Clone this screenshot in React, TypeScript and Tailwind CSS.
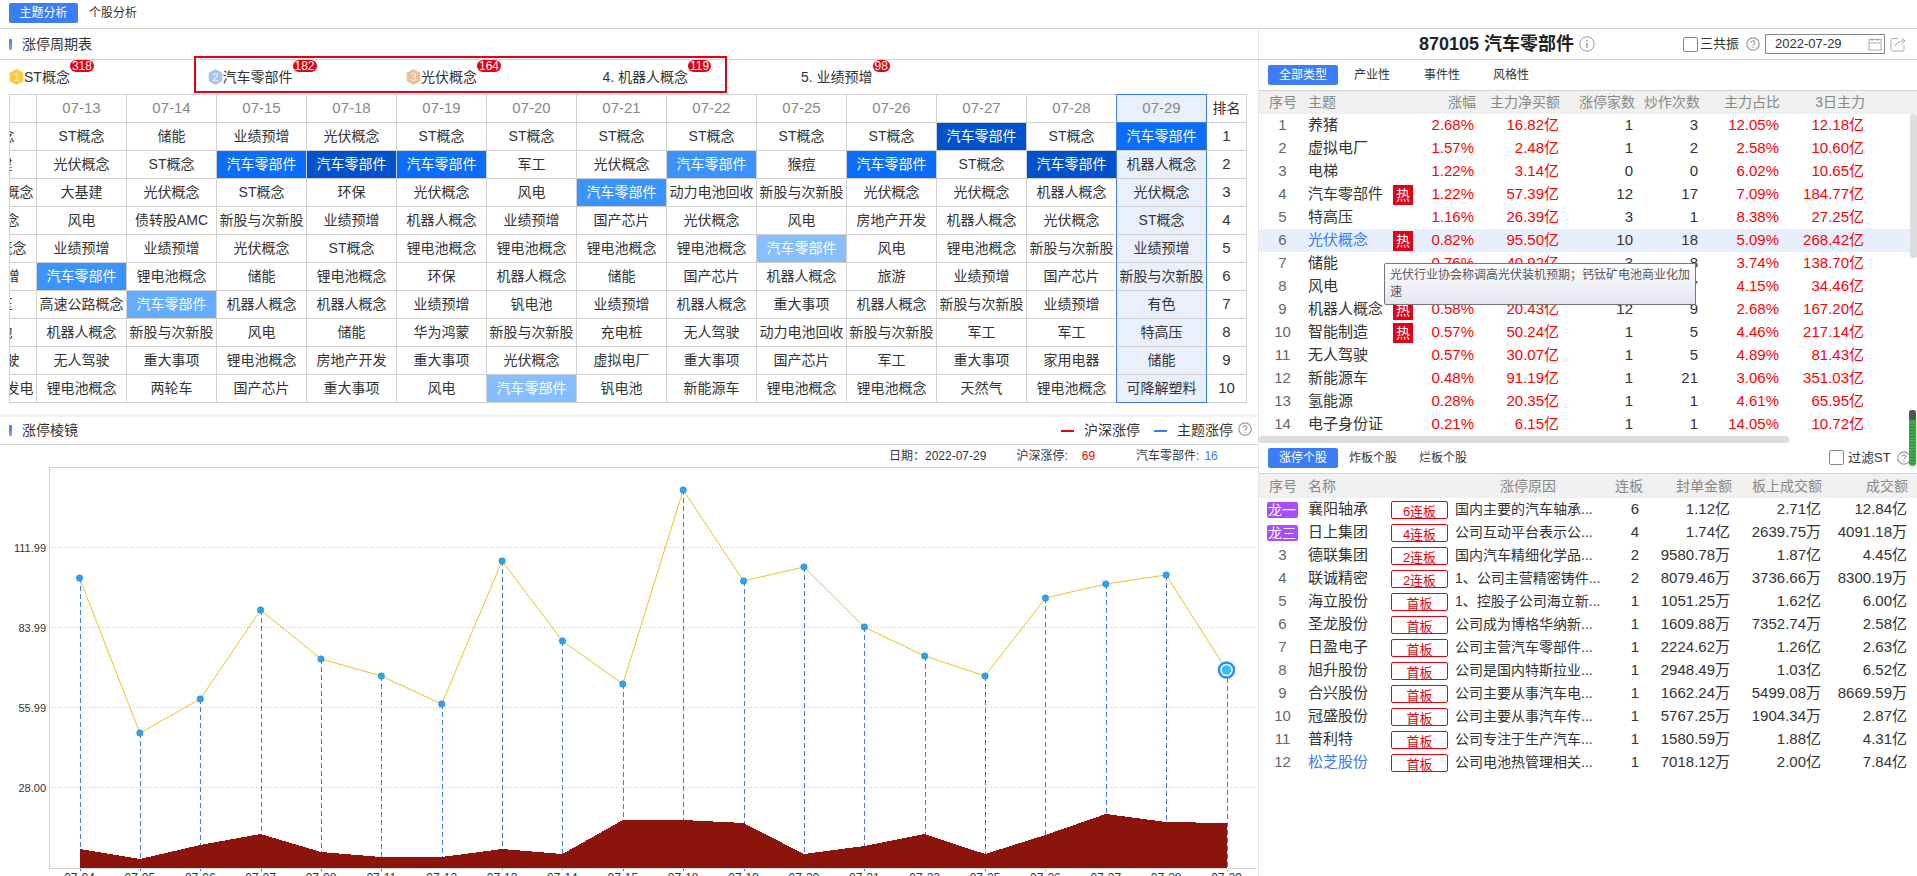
import { ReactNode } from "react";

const HOT = "汽车零部件";

const dates = ["07-12", "07-13", "07-14", "07-15", "07-18", "07-19", "07-20", "07-21", "07-22", "07-25", "07-26", "07-27", "07-28", "07-29"];

const shade: Record<string, string> = {
  d: "bg-[#0052cc]",
  n: "bg-[#0a6efa]",
  m: "bg-[#3b94fd]",
  l: "bg-[#62adff]",
  x: "bg-[#85bfff]",
};

// "汽车零部件:d" marks a coloured cell
const cycle: string[][] = [
  ["ST概念", "ST概念", "储能", "业绩预增", "光伏概念", "ST概念", "ST概念", "ST概念", "ST概念", "ST概念", "ST概念", "汽车零部件:d", "ST概念", "汽车零部件:n"],
  ["大基建", "光伏概念", "ST概念", "汽车零部件:n", "汽车零部件:d", "汽车零部件:n", "军工", "光伏概念", "汽车零部件:m", "猴痘", "汽车零部件:n", "ST概念", "汽车零部件:d", "机器人概念"],
  ["高速公路概念", "大基建", "光伏概念", "ST概念", "环保", "光伏概念", "风电", "汽车零部件:m", "动力电池回收", "新股与次新股", "光伏概念", "光伏概念", "机器人概念", "光伏概念"],
  ["光伏概念", "风电", "债转股AMC", "新股与次新股", "业绩预增", "机器人概念", "业绩预增", "国产芯片", "光伏概念", "风电", "房地产开发", "机器人概念", "光伏概念", "ST概念"],
  ["机器人概念", "业绩预增", "业绩预增", "光伏概念", "ST概念", "锂电池概念", "锂电池概念", "锂电池概念", "锂电池概念", "汽车零部件:x", "风电", "锂电池概念", "新股与次新股", "业绩预增"],
  ["业绩预增", "汽车零部件:m", "锂电池概念", "储能", "锂电池概念", "环保", "机器人概念", "储能", "国产芯片", "机器人概念", "旅游", "业绩预增", "国产芯片", "新股与次新股"],
  ["特高压", "高速公路概念", "汽车零部件:l", "机器人概念", "机器人概念", "业绩预增", "钒电池", "业绩预增", "机器人概念", "重大事项", "机器人概念", "新股与次新股", "业绩预增", "有色"],
  ["钒电池", "机器人概念", "新股与次新股", "风电", "储能", "华为鸿蒙", "新股与次新股", "充电桩", "无人驾驶", "动力电池回收", "新股与次新股", "军工", "军工", "特高压"],
  ["无人驾驶", "无人驾驶", "重大事项", "锂电池概念", "房地产开发", "重大事项", "光伏概念", "虚拟电厂", "重大事项", "国产芯片", "军工", "重大事项", "家用电器", "储能"],
  ["海上风力发电", "锂电池概念", "两轮车", "国产芯片", "重大事项", "风电", "汽车零部件:x", "钒电池", "新能源车", "锂电池概念", "锂电池概念", "天然气", "锂电池概念", "可降解塑料"],
];

const themes = [
  ["养猪", 0, "2.68%", "16.82亿", "1", "3", "12.05%", "12.18亿"],
  ["虚拟电厂", 0, "1.57%", "2.48亿", "1", "2", "2.58%", "10.60亿"],
  ["电梯", 0, "1.22%", "3.14亿", "0", "0", "6.02%", "10.65亿"],
  ["汽车零部件", 1, "1.22%", "57.39亿", "12", "17", "7.09%", "184.77亿"],
  ["特高压", 0, "1.16%", "26.39亿", "3", "1", "8.38%", "27.25亿"],
  ["光伏概念", 1, "0.82%", "95.50亿", "10", "18", "5.09%", "268.42亿"],
  ["储能", 0, "0.76%", "40.92亿", "3", "8", "3.74%", "138.70亿"],
  ["风电", 0, "0.70%", "8.95亿", "1", "7", "4.15%", "34.46亿"],
  ["机器人概念", 1, "0.58%", "20.43亿", "12", "9", "2.68%", "167.20亿"],
  ["智能制造", 1, "0.57%", "50.24亿", "1", "5", "4.46%", "217.14亿"],
  ["无人驾驶", 0, "0.57%", "30.07亿", "1", "5", "4.89%", "81.43亿"],
  ["新能源车", 0, "0.48%", "91.19亿", "1", "21", "3.06%", "351.03亿"],
  ["氢能源", 0, "0.28%", "20.35亿", "1", "1", "4.61%", "65.95亿"],
  ["电子身份证", 0, "0.21%", "6.15亿", "1", "1", "14.05%", "10.72亿"],
] as const;

const stocks = [
  ["龙一", "襄阳轴承", "6连板", "国内主要的汽车轴承...", "6", "1.12亿", "2.71亿", "12.84亿"],
  ["龙三", "日上集团", "4连板", "公司互动平台表示公...", "4", "1.74亿", "2639.75万", "4091.18万"],
  ["3", "德联集团", "2连板", "国内汽车精细化学品...", "2", "9580.78万", "1.87亿", "4.45亿"],
  ["4", "联诚精密", "2连板", "1、公司主营精密铸件...", "2", "8079.46万", "3736.66万", "8300.19万"],
  ["5", "海立股份", "首板", "1、控股子公司海立新...", "1", "1051.25万", "1.62亿", "6.00亿"],
  ["6", "圣龙股份", "首板", "公司成为博格华纳新...", "1", "1609.88万", "7352.74万", "2.58亿"],
  ["7", "日盈电子", "首板", "公司主营汽车零部件...", "1", "2224.62万", "1.26亿", "2.63亿"],
  ["8", "旭升股份", "首板", "公司是国内特斯拉业...", "1", "2948.49万", "1.03亿", "6.52亿"],
  ["9", "合兴股份", "首板", "公司主要从事汽车电...", "1", "1662.24万", "5499.08万", "8669.59万"],
  ["10", "冠盛股份", "首板", "公司主要从事汽车传...", "1", "5767.25万", "1904.34万", "2.87亿"],
  ["11", "普利特", "首板", "公司专注于生产汽车...", "1", "1580.59万", "1.88亿", "4.31亿"],
  ["12", "松芝股份", "首板", "公司电池热管理相关...", "1", "7018.12万", "2.00亿", "7.84亿"],
];

const ranks = [
  { no: 1, name: "ST概念", count: "318", fill: "#fbc93a", text: "#fff3c4" },
  { no: 2, name: HOT, count: "182", fill: "#a9c6ea", text: "#eef5fc" },
  { no: 3, name: "光伏概念", count: "164", fill: "#eac19c", text: "#fdf3e8" },
  { no: 4, name: "机器人概念", count: "119" },
  { no: 5, name: "业绩预增", count: "98" },
];

const xs = Array.from({ length: 20 }, (_, i) => 79.5 + i * 60.37);
const xLabels = ["07-04", "07-05", "07-06", "07-07", "07-08", "07-11", "07-12", "07-13", "07-14", "07-15", "07-18", "07-19", "07-20", "07-21", "07-22", "07-25", "07-26", "07-27", "07-28", "07-29"];
const lineY = [578, 733, 699, 610, 659, 676, 704, 561, 641, 684, 490, 581, 567, 627, 656, 676, 598, 584, 575, 670];
const areaY = [849, 859, 845, 834, 852, 857, 857, 849, 854, 820, 820, 823, 854, 846, 834, 854, 835, 814, 822, 823];
const yTicks = [
  { y: 547.5, label: "111.99" },
  { y: 627.5, label: "83.99" },
  { y: 707.5, label: "55.99" },
  { y: 787.5, label: "28.00" },
];

function Help({ className = "" }: { className?: string }) {
  return (
    <svg viewBox="0 0 14 14" className={`h-[14px] w-[14px] shrink-0 ${className}`}>
      <circle cx="7" cy="7" r="6.2" fill="none" stroke="#999" strokeWidth="1.2" />
      <path d="M5.2 5.6a1.8 1.8 0 1 1 2.7 1.6c-.6.35-.9.7-.9 1.3" fill="none" stroke="#999" strokeWidth="1.1" />
      <circle cx="7" cy="10.4" r=".7" fill="#999" />
    </svg>
  );
}

function SectionTitle({ children }: { children: ReactNode }) {
  return (
    <div className="flex items-center text-[14px] text-[#333]">
      <span className="ml-[9px] h-[11px] w-[3px] rounded-[1px] bg-gradient-to-b from-[#3b78f7] to-[#7fa8f9]" />
      <span className="ml-[10px]">{children}</span>
    </div>
  );
}

function Medal({ no, fill, text }: { no: number; fill: string; text: string }) {
  return (
    <svg viewBox="0 0 15 16" className="h-[16px] w-[15px] shrink-0">
      <path d="M7.5 1 13.5 4.2v7.6L7.5 15 1.5 11.8V4.2z" fill={fill} stroke={fill} strokeWidth="1.6" strokeLinejoin="round" />
      <text x="7.5" y="12" textAnchor="middle" fontSize="11" fill={text}>
        {no}
      </text>
    </svg>
  );
}

function CycleTable() {
  return (
    <div className="ml-[9px] h-[309px] w-[1239px] overflow-hidden border-l border-[#d0d0d0]">
      <table className="-ml-[63px] w-[1300px] table-fixed border-separate border-spacing-0 text-[14px] text-[#333]">
        <colgroup>
          {dates.map((d) => (
            <col key={d} className="w-[90px]" />
          ))}
          <col className="w-[40px]" />
        </colgroup>
        <thead>
          <tr>
            {dates.map((d, i) => (
              <th
                key={d}
                className={`h-[28.5px] whitespace-nowrap border-y border-r p-0 text-center text-[15px] font-normal text-[#888] ${
                  i === 13 ? "border-[#3b7de8] bg-[#e9effb]" : i === 12 ? "border-y-[#d0d0d0] border-r-[#3b7de8]" : "border-[#d0d0d0]"
                }`}
              >
                {d}
              </th>
            ))}
            <th className="border-y border-r border-[#d0d0d0] p-0 text-center font-normal">排名</th>
          </tr>
        </thead>
        <tbody>
          {cycle.map((row, r) => (
            <tr key={r}>
              {row.map((cell, c) => {
                const [name, tone] = cell.split(":");
                const last = c === 13;
                const edge = last
                  ? `border-r-[#3b7de8] ${r === 9 ? "border-b-[#3b7de8]" : "border-b-[#d0d0d0]"}`
                  : c === 12
                    ? "border-r-[#3b7de8] border-b-[#d0d0d0]"
                    : "border-[#d0d0d0]";
                return (
                  <td
                    key={c}
                    className={`h-[28px] whitespace-nowrap border-r border-b p-0 text-center ${edge} ${
                      tone ? `${shade[tone]} text-white` : last ? "bg-[#e9effb]" : ""
                    }`}
                  >
                    {name}
                  </td>
                );
              })}
              <td className="border-r border-b border-[#d0d0d0] p-0 text-center text-[15px]">{r + 1}</td>
            </tr>
          ))}
        </tbody>
      </table>
    </div>
  );
}

function Chart() {
  const area = `79.5,868 ${xs.map((x, i) => `${x},${areaY[i]}`).join(" ")} ${xs[19]},868`;
  return (
    <svg viewBox="0 468 1258 408" className="block h-[408px] w-[1258px]">
      <line x1="49.5" y1="468" x2="49.5" y2="868" stroke="#d4d4d4" />
      {yTicks.map((t) => (
        <g key={t.label}>
          <line x1="49" y1={t.y} x2="1257" y2={t.y} stroke="#c8c8c8" strokeDasharray="1 2" />
          <text x="46" y={t.y + 4} textAnchor="end" fontSize="11" fill="#333" fontFamily="Liberation Sans">
            {t.label}
          </text>
        </g>
      ))}
      {xs.map((x, i) => (
        <line key={x} x1={Math.round(x) + 0.5} y1={lineY[i]} x2={Math.round(x) + 0.5} y2="871" stroke="#3b78f7" strokeDasharray="5 3" />
      ))}
      <polygon points={area} fill="#8b150c" shapeRendering="crispEdges" />
      <line x1="49" y1="868.5" x2="1257" y2="868.5" stroke="#d4d4d4" />
      <polyline points={xs.map((x, i) => `${x},${lineY[i]}`).join(" ")} fill="none" stroke="#efc31a" strokeWidth="1" />
      {xs.slice(0, 19).map((x, i) => (
        <circle key={x} cx={x} cy={lineY[i]} r="3.2" fill="#2ba3ee" stroke="#2a86d6" strokeWidth=".6" />
      ))}
      <circle cx={xs[19]} cy={lineY[19]} r="7.5" fill="#fff" stroke="#1f8fff" strokeWidth="2.4" />
      <circle cx={xs[19]} cy={lineY[19]} r="4.8" fill="#35bdf7" />
      {xs.map((x, i) => (
        <text key={x} x={x} y="882" textAnchor="middle" fontSize="12" fill="#333" fontFamily="Liberation Sans">
          {xLabels[i]}
        </text>
      ))}
    </svg>
  );
}

function ThemeTable() {
  const cols = "grid grid-cols-[49px_85px_20px_63px_84px_75px_65px_80px_85px]";
  return (
    <div>
      <div className={`${cols} h-[23px] items-center bg-[#f0f0f0] text-[14px] text-[#888]`}>
        <span className="pl-[10px]">序号</span>
        <span>主题</span>
        <span />
        {["涨幅", "主力净买额", "涨停家数", "炒作次数", "主力占比", "3日主力"].map((h) => (
          <span key={h} className="whitespace-nowrap text-right">
            {h}
          </span>
        ))}
      </div>
      {themes.map((t, i) => (
        <div key={t[0]} className={`${cols} h-[23px] items-center text-[15px] ${i === 5 ? "bg-[#e8effc]" : ""}`}>
          <span className="pr-[2px] text-center text-[#666]">{i + 1}</span>
          <span className={`whitespace-nowrap ${i === 5 ? "text-[#3b78f7]" : "text-[#333]"}`}>{t[0]}</span>
          <span className="flex justify-center">
            {t[1] === 1 && <span className="flex h-[20px] w-[20px] items-center justify-center bg-[#e60012] text-[14px] leading-none text-white">热</span>}
          </span>
          <span className="pr-[2px] text-right text-[#f00]">{t[2]}</span>
          <span className="pr-[1px] text-right text-[#f00]">{t[3]}</span>
          <span className="pr-[2px] text-right text-[#333]">{t[4]}</span>
          <span className="pr-[2px] text-right text-[#333]">{t[5]}</span>
          <span className="pr-[1px] text-right text-[#f00]">{t[6]}</span>
          <span className="pr-[1px] text-right text-[#f00]">{t[7]}</span>
        </div>
      ))}
    </div>
  );
}

function StockTable() {
  const cols = "grid grid-cols-[49px_83px_57px_7px_160px_26px_91px_90px_86px]";
  return (
    <div>
      <div className={`${cols} h-[24px] items-center bg-[#f0f0f0] text-[14px] text-[#888]`}>
        <span className="pl-[10px]">序号</span>
        <span>名称</span>
        <span />
        <span />
        <span className="pl-[45px]">涨停原因</span>
        <span className="whitespace-nowrap text-right">连板</span>
        <span className="whitespace-nowrap text-right">封单金额</span>
        <span className="whitespace-nowrap text-right">板上成交额</span>
        <span className="whitespace-nowrap text-right">成交额</span>
      </div>
      {stocks.map((s, i) => (
        <div key={s[1]} className={`${cols} h-[23px] items-center text-[15px] text-[#333]`}>
          <span className="flex justify-center pr-[2px] text-[#666]">
            {i < 2 ? (
              <span className="ml-[-1px] flex h-[16px] w-[31px] items-center justify-center rounded-[2px] bg-[#a64dff] text-[14px] leading-none text-white">{s[0]}</span>
            ) : (
              s[0]
            )}
          </span>
          <span className={`whitespace-nowrap ${i === 11 ? "text-[#3b78f7]" : ""}`}>{s[1]}</span>
          <span className="flex h-[18px] items-center justify-center rounded-[2px] border border-[#e60012] pt-[3px] text-[13px] leading-none text-[#e60012]">{s[2]}</span>
          <span />
          <span className="whitespace-nowrap text-[14px]">{s[3]}</span>
          <span className="pr-[2px] text-right">{s[4]}</span>
          <span className="pr-[2px] text-right">{s[5]}</span>
          <span className="pr-[1px] text-right">{s[6]}</span>
          <span className="pr-[1px] text-right">{s[7]}</span>
        </div>
      ))}
    </div>
  );
}

export default function App() {
  return (
    <div className="relative h-[876px] w-full overflow-hidden bg-white font-['Liberation_Sans','Noto_Sans_CJK_SC',sans-serif] text-[#333]">
      {/* Top tabs */}
      <div className="flex h-[29px] items-start border-b border-[#d4d4d4] pl-[9px] pt-[3px] text-[12px]">
        <span className="flex h-[20px] w-[69px] items-center justify-center rounded-[2px] bg-[#3d7cf7] text-white">主题分析</span>
        <span className="ml-[11px] flex h-[20px] items-center">个股分析</span>
      </div>

      <div className="flex h-[847px]">
        {/* Left */}
        <div className="w-[1259px] shrink-0 border-r border-[#e2e2e2]">
          <div className="flex h-[31px] items-center border-b border-[#d4d4d4]">
            <SectionTitle>涨停周期表</SectionTitle>
          </div>
          <div className="relative flex h-[34px] items-center pl-[9px] text-[14px]">
            {ranks.map((r) => (
              <div key={r.no} className="flex w-[198.5px] items-center">
                {r.fill && <Medal no={r.no} fill={r.fill} text={r.text} />}
                <span className={`relative whitespace-nowrap ${r.fill ? "" : "ml-[-2px]"}`}>
                  {r.fill ? r.name : `${r.no}. ${r.name}`}
                  <span className="absolute left-full top-[-7px] flex h-[12px] items-center rounded-[6px] bg-[#e60012] px-[2px] text-[12px] leading-none text-white">
                    {r.count}
                  </span>
                </span>
              </div>
            ))}
          </div>
          <CycleTable />
          <div className="mt-[11px] h-[3px] bg-[#f2f2f2]" />
          <div className="flex h-[28px] items-center justify-between border-b border-[#d4d4d4]">
            <SectionTitle>涨停棱镜</SectionTitle>
            <div className="flex items-center pr-[6px] text-[14px]">
              <span className="h-[2px] w-[13px] bg-[#e60012]" />
              <span className="ml-[10px]">沪深涨停</span>
              <span className="ml-[14px] h-[2px] w-[13px] bg-[#3b78f7]" />
              <span className="ml-[10px]">主题涨停</span>
              <Help className="mb-[4px] ml-[5px]" />
            </div>
          </div>
          <div className="ml-[49px] flex h-[23px] items-center border-b border-[#d4d4d4] text-[12px]">
            <span className="ml-[840px] whitespace-nowrap">日期：2022-07-29</span>
            <span className="ml-[30px] whitespace-nowrap">沪深涨停:</span>
            <span className="ml-[14px] text-[#f00]">69</span>
            <span className="ml-[41px] whitespace-nowrap">汽车零部件:</span>
            <span className="ml-[5px] text-[#3b78f7]">16</span>
          </div>
          <Chart />
        </div>

        {/* Right */}
        <div className="min-w-0 flex-1">
          <div className="flex h-[31px] items-center border-b border-[#d4d4d4]">
            <span className="ml-[160px] whitespace-nowrap text-[18px] font-bold leading-none text-[#222]">870105 汽车零部件</span>
            <svg viewBox="0 0 16 16" className="ml-[5px] h-[16px] w-[16px]">
              <circle cx="8" cy="8" r="7.2" fill="none" stroke="#999" />
              <circle cx="8" cy="4.6" r=".9" fill="#999" />
              <path d="M8 7v5" stroke="#999" strokeWidth="1.4" />
            </svg>
            <span className="ml-[88px] h-[15px] w-[15px] rounded-[2px] border border-[#888]" />
            <span className="ml-[2px] whitespace-nowrap text-[13px]">三共振</span>
            <Help className="ml-[7px]" />
            <div className="ml-[5px] flex h-[20px] w-[120px] items-center justify-between border border-[#888] pl-[9px] pr-[2px] text-[13px]">
              <span>2022-07-29</span>
              <svg viewBox="0 0 14 14" className="h-[14px] w-[14px]" fill="none" stroke="#aaa">
                <rect x="1" y="2.5" width="12" height="10.5" />
                <path d="M1 6h12M4 1v3M10 1v3" />
              </svg>
            </div>
            <svg viewBox="0 0 16 16" className="ml-[5px] h-[16px] w-[16px]" fill="none" stroke="#aaa">
              <path d="M8 2.5H2.5a1.5 1.5 0 0 0-1.5 1.5v9.5A1.5 1.5 0 0 0 2.5 15h10a1.5 1.5 0 0 0 1.5-1.5V9" />
              <path d="M5 10.5C6 7 9 5 14.5 5M11.5 1.5l3.5 3.5-3.5 3.5" />
            </svg>
          </div>
          <div className="flex h-[31px] items-center border-b border-[#d4d4d4] pb-[1px] pl-[9px] text-[12px]">
            <span className="flex h-[20px] w-[70px] items-center justify-center rounded-[2px] bg-[#3d7cf7] text-white">全部类型</span>
            <span className="ml-[16px]">产业性</span>
            <span className="ml-[34px]">事件性</span>
            <span className="ml-[33px]">风格性</span>
          </div>
          <ThemeTable />
          <div className="h-[7px] w-[530px] rounded-[3px] bg-[#ddd]" />
          <div className="flex h-[31px] items-center border-b border-[#d4d4d4] pb-[1px] pl-[9px] text-[12px]">
            <span className="flex h-[20px] w-[70px] items-center justify-center rounded-[2px] bg-[#3d7cf7] text-white">涨停个股</span>
            <span className="ml-[11px]">炸板个股</span>
            <span className="ml-[22px]">烂板个股</span>
            <span className="ml-[362px] h-[15px] w-[15px] rounded-[2px] border border-[#888]" />
            <span className="ml-[4px] whitespace-nowrap text-[13px]">过滤ST</span>
            <Help className="ml-[6px]" />
          </div>
          <StockTable />
        </div>
      </div>

      {/* Overlays */}
      <div className="absolute left-[194px] top-[56px] h-[37px] w-[533px] border-2 border-[#e60012]" />
      <div className="absolute left-[1910px] top-[114px] h-[144px] w-[7px] rounded-[3px] bg-[#ddd]" />
      <div className="absolute left-[1909px] top-[410px] flex h-[56px] w-[7px] flex-col overflow-hidden rounded-[3px] bg-[repeating-linear-gradient(to_bottom,#3fae49_0,#3fae49_2px,#2f8f3a_2px,#2f8f3a_3px)]">
        <div className="h-[10px] bg-[#4a5a50]" />
      </div>
      <div className="absolute left-[1384px] top-[263px] w-[312px] rounded-[2px] border border-[#767676] bg-gradient-to-b from-white to-[#e4e5f0] px-[5px] py-[3px] text-[12px] leading-[17px] text-[#575757]">
        光伏行业协会称调高光伏装机预期；钙钛矿电池商业化加速
      </div>
    </div>
  );
}
